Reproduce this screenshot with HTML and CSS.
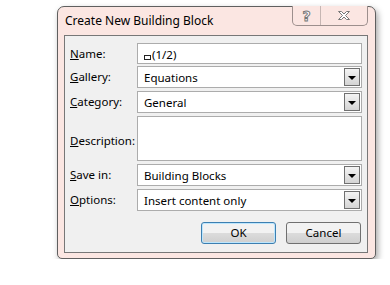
FILE: index.html
```html
<!DOCTYPE html>
<html lang="en">
<head>
<meta charset="UTF-8">
<title>Create New Building Block</title>
<link rel="stylesheet" href="styles.css">
</head>
<body>
<div class="window">
  <div class="titlebar">
    <div class="title">Create New Building Block</div>
    <div class="caption-buttons">
      <div class="cap-btn help">?</div>
      <div class="cap-btn close">
        <svg width="14" height="11" viewBox="0 0 14 11">
          <path d="M1.5 1.5 H4.5 L7 4 L9.5 1.5 H12.5 L8.5 5.5 L12.5 9.5 H9.5 L7 7 L4.5 9.5 H1.5 L5.5 5.5 Z" fill="#fff" stroke="#777" stroke-width="1" stroke-linejoin="round"/>
        </svg>
      </div>
    </div>
  </div>
  <div class="client">
    <div class="row r-name">
      <label><u>N</u>ame:</label>
      <div class="field"><span class="ph"></span>(1/2)</div>
    </div>
    <div class="row">
      <label><u>G</u>allery:</label>
      <div class="field combo">Equations<span class="drop"></span></div>
    </div>
    <div class="row">
      <label><u>C</u>ategory:</label>
      <div class="field combo">General<span class="drop"></span></div>
    </div>
    <div class="row r-desc">
      <label><u>D</u>escription:</label>
      <div class="field"></div>
    </div>
    <div class="row">
      <label><u>S</u>ave in:</label>
      <div class="field combo">Building Blocks<span class="drop"></span></div>
    </div>
    <div class="row">
      <label><u>O</u>ptions:</label>
      <div class="field combo">Insert content only<span class="drop"></span></div>
    </div>
    <div class="actions">
      <div class="btn default">OK</div>
      <div class="btn">Cancel</div>
    </div>
  </div>
</div>
</body>
</html>
```
FILE: styles.css
```css
body {
  margin: 0;
  background: #fff;
  font-family: "Noto Sans", "Open Sans", sans-serif;
  font-size: 11.5px;
  color: #000;
}

.window {
  margin: 6px 0 0 57px;
  width: 319px;
  height: 253px;
  box-sizing: border-box;
  background: #fbe6e2;
  border: 1px solid #5f5f5f;
  border-radius: 7px 7px 5px 5px;
  box-shadow: 2px 3px 6px rgba(0, 0, 0, 0.35);
  display: flex;
  flex-direction: column;
}

.titlebar {
  height: 28px;
  display: flex;
  justify-content: space-between;
}

.title {
  padding: 5px 0 0 7px;
  font-size: 12px;
}

.caption-buttons {
  display: flex;
  margin-right: 7px;
  height: 19px;
  margin-top: -1px;
  border: 1px solid #9c8f8d;
  border-top: none;
  border-radius: 0 0 5px 5px;
  background: #fbe6e2;
}

.cap-btn {
  display: flex;
  align-items: center;
  justify-content: center;
}

.help {
  width: 27px;
  border-right: 1px solid #c6b6b3;
  font-family: "DejaVu Sans", sans-serif;
  font-weight: bold;
  font-size: 14px;
  color: #fff;
  -webkit-text-stroke: 1px #777;
}

.close {
  width: 46px;
}

.client {
  flex: 1;
  margin: 0 7px 5px 6px;
  background: #f0f0f0;
  border: 1px solid #777;
  padding: 7px 5px 0 5px;
}

.row {
  display: flex;
  height: 22px;
  margin-bottom: 3px;
}

.r-name {
  height: 21px;
  margin-bottom: 2px;
}

.r-desc {
  height: 45px;
}

.row label {
  width: 67px;
  padding-top: 3px;
}

.r-desc label {
  align-self: center;
}

.field {
  flex: 1;
  position: relative;
  background: #fff;
  border: 1px solid #acacac;
  padding: 3px 0 0 6px;
  box-sizing: border-box;
}

.ph {
  display: inline-block;
  width: 5px;
  height: 3px;
  border: 1px solid #222;
  margin-right: 1px;
  vertical-align: -1px;
}

.drop {
  position: absolute;
  right: 1px;
  top: 1px;
  bottom: 1px;
  width: 16px;
  box-sizing: border-box;
  border: 1px solid #707070;
  background: linear-gradient(#f4f4f4, #d4d4d4);
}

.drop::after {
  content: "";
  position: absolute;
  left: 3px;
  top: 7px;
  border-left: 4px solid transparent;
  border-right: 4px solid transparent;
  border-top: 4px solid #000;
}

.actions {
  display: flex;
  justify-content: flex-end;
  gap: 10px;
  margin-top: 11px;
  padding-right: 1px;
}

.btn {
  width: 75px;
  height: 22px;
  box-sizing: border-box;
  border: 1px solid #707070;
  border-radius: 3px;
  background: linear-gradient(#f2f2f2 50%, #dcdcdc 50%, #cfcfcf);
  text-align: center;
  line-height: 19px;
}

.btn.default {
  border-color: #3c7fb1;
  box-shadow: inset 0 0 0 1px #bde6fd;
}
```
